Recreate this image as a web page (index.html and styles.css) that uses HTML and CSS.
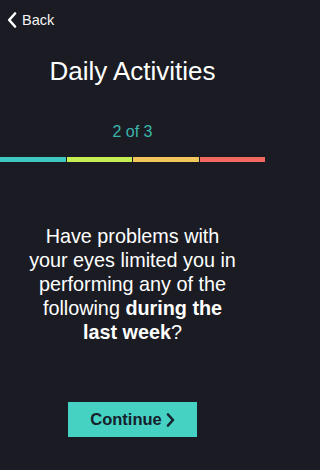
FILE: index.html
```html
<!DOCTYPE html>
<html lang="en">
<head>
<meta charset="utf-8">
<title>Daily Activities</title>
<link rel="stylesheet" href="styles.css">
</head>
<body>
<div class="screen">
  <div class="nav">
    <svg class="back-icon" width="10" height="16" viewBox="0 0 10 16"><path d="M8 1.5 L2.2 8 L8 14.5" fill="none" stroke="#ffffff" stroke-width="2.6" stroke-linecap="round" stroke-linejoin="round"/></svg>
    <span class="back-label">Back</span>
  </div>
  <h1 class="title">Daily Activities</h1>
  <div class="step">2 of 3</div>
  <div class="progress">
    <span class="seg seg-teal"></span>
    <span class="seg seg-green"></span>
    <span class="seg seg-yellow"></span>
    <span class="seg seg-red"></span>
  </div>
  <p class="question">Have problems with<br>your eyes limited you in<br>performing any of the<br>following <strong>during the</strong><br><strong>last week</strong>?</p>
  <div class="actions">
    <button class="continue">Continue<svg class="chev" width="9" height="14" viewBox="0 0 9 14"><path d="M2 1.5 L7 7 L2 12.5" fill="none" stroke="#15202b" stroke-width="2.6" stroke-linecap="round" stroke-linejoin="round"/></svg></button>
  </div>
</div>
</body>
</html>
```
FILE: styles.css
```css
html, body {
  margin: 0;
  padding: 0;
  background: #1b1c23;
}
.screen {
  width: 265px;
  height: 470px;
  display: flex;
  flex-direction: column;
  font-family: "Liberation Sans", Arial, sans-serif;
  color: #ffffff;
  overflow: hidden;
}
.nav {
  display: flex;
  align-items: center;
  gap: 5px;
  padding: 10px 0 0 7px;
  height: 20px;
}
.back-icon {
  display: block;
}
.back-label {
  font-size: 14.5px;
  line-height: 20px;
  color: #f4f4f4;
}
.title {
  margin: 26px 0 0;
  font-size: 26px;
  line-height: 30px;
  font-weight: normal;
  text-align: center;
  color: #ffffff;
}
.step {
  margin-top: 36px;
  font-size: 16px;
  line-height: 20px;
  text-align: center;
  color: #3bb4aa;
}
.progress {
  margin-top: 15px;
  height: 5px;
  display: grid;
  grid-template-columns: 66px 65px 66px 1fr;
  gap: 1px;
}
.seg { display: block; }
.seg-teal { background: #3ec9c0; }
.seg-green { background: #c5ef52; }
.seg-yellow { background: #f3c65c; }
.seg-red { background: #f2675f; }
.question {
  margin: 62px 0 0;
  font-size: 19.8px;
  line-height: 24px;
  text-align: center;
  color: #ffffff;
}
.question strong {
  font-weight: bold;
}
.actions {
  margin-top: 58px;
  display: flex;
  justify-content: center;
}
.continue {
  width: 129px;
  height: 35px;
  border: none;
  border-radius: 0;
  background: #45d2c3;
  display: flex;
  align-items: center;
  justify-content: center;
  gap: 4px;
  padding: 0;
  font-family: "Liberation Sans", Arial, sans-serif;
  font-size: 16.5px;
  font-weight: bold;
  color: #15202b;
}
.chev { display: block; }
```
